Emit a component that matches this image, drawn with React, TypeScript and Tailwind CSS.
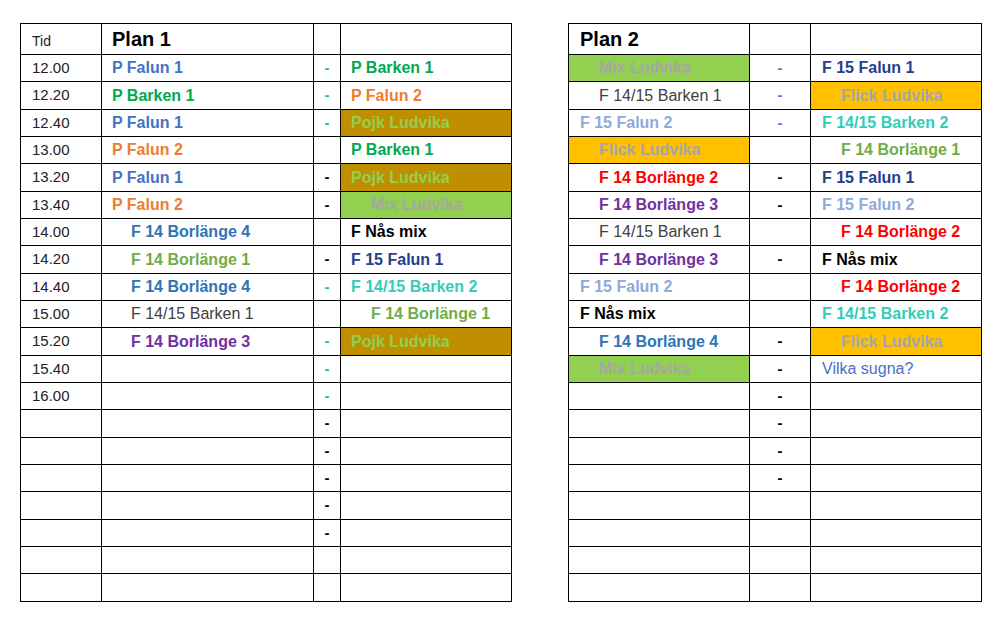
import React from "react";

type Cell = {
  t?: string;
  c?: string; // text colour class
  bg?: string; // fill class
  indent?: boolean;
  regular?: boolean;
};

type Dash = "g" | "b" | "k" | "";

const PL = { t: "P Falun 1", c: "text-[#4472c4]" };
const PB = { t: "P Barken 1", c: "text-[#00a850]" };
const PF2 = { t: "P Falun 2", c: "text-[#ed7d31]" };
const POJK = { t: "Pojk Ludvika", c: "text-[#92d050]", bg: "bg-[#bf8f00]" };
const MIX = { t: "Mix Ludvika", c: "text-[#a6a6a6]", bg: "bg-[#92d050]", indent: true };
const FLICK = { t: "Flick Ludvika", c: "text-[#a6a6a6]", bg: "bg-[#ffc000]", indent: true };
const B4 = { t: "F 14 Borlänge 4", c: "text-[#2e75b6]", indent: true };
const B1 = { t: "F 14 Borlänge 1", c: "text-[#70ad47]", indent: true };
const B2 = { t: "F 14 Borlänge 2", c: "text-[#ff0000]", indent: true };
const B3 = { t: "F 14 Borlänge 3", c: "text-[#7030a0]", indent: true };
const BK1 = { t: "F 14/15 Barken 1", c: "text-[#404040]", indent: true, regular: true };
const BK2 = { t: "F 14/15 Barken 2", c: "text-[#33ccb8]" };
const NAS = { t: "F Nås mix", c: "text-black" };
const FA1 = { t: "F 15 Falun 1", c: "text-[#24408e]" };
const FA2 = { t: "F 15 Falun 2", c: "text-[#8eaadb]" };
const VILKA = { t: "Vilka sugna?", c: "text-[#4472c4]", regular: true };

const PLAN1: [string, Cell, Dash, Cell][] = [
  ["12.00", PL, "g", PB],
  ["12.20", PB, "g", PF2],
  ["12.40", PL, "g", POJK],
  ["13.00", PF2, "", PB],
  ["13.20", PL, "k", POJK],
  ["13.40", PF2, "k", MIX],
  ["14.00", B4, "", NAS],
  ["14.20", B1, "k", FA1],
  ["14.40", B4, "g", BK2],
  ["15.00", BK1, "", B1],
  ["15.20", B3, "g", POJK],
  ["15.40", {}, "g", {}],
  ["16.00", {}, "g", {}],
  ["", {}, "k", {}],
  ["", {}, "k", {}],
  ["", {}, "k", {}],
  ["", {}, "k", {}],
  ["", {}, "k", {}],
  ["", {}, "", {}],
  ["", {}, "", {}],
];

const PLAN2: [Cell, Dash, Cell][] = [
  [MIX, "b", FA1],
  [BK1, "b", FLICK],
  [FA2, "b", BK2],
  [FLICK, "", B1],
  [B2, "k", FA1],
  [B3, "k", FA2],
  [BK1, "", B2],
  [B3, "k", NAS],
  [FA2, "", B2],
  [NAS, "", BK2],
  [B4, "k", FLICK],
  [MIX, "k", VILKA],
  [{}, "k", {}],
  [{}, "k", {}],
  [{}, "k", {}],
  [{}, "k", {}],
  [{}, "", {}],
  [{}, "", {}],
  [{}, "", {}],
  [{}, "", {}],
];

const td = "border border-black p-0 align-middle";

function TeamCell({ cell, pad, indentPad }: { cell: Cell; pad: string; indentPad: string }) {
  return (
    <td className={`${td} ${cell.bg ?? ""}`}>
      {cell.t && (
        <span
          className={`block whitespace-nowrap text-[16px] leading-none ${cell.indent ? indentPad : pad} ${
            cell.regular ? "font-normal" : "font-bold"
          } ${cell.c ?? ""}`}
        >
          {cell.t}
        </span>
      )}
    </td>
  );
}

function DashCell({ d }: { d: Dash }) {
  const color =
    d === "g" ? "text-[#3cb371]" : d === "b" ? "text-[#4a7cc9]" : "text-black";
  return (
    <td className={`${td} text-center text-[15px] font-bold ${color}`}>{d ? "-" : ""}</td>
  );
}

const rowH = (i: number) => (i % 3 === 1 ? "h-[28px]" : "h-[27px]");

export default function App() {
  return (
    <div
      className="w-[1000px] h-[623px] bg-white flex items-start gap-[56px] pl-[20px] pt-[23px]"
      style={{ fontFamily: '"Liberation Sans", Arial, sans-serif' }}
    >
      {/* Plan 1 */}
      <table className="table-fixed border-collapse w-[491px]">
        <colgroup>
          <col className="w-[81px]" />
          <col className="w-[212px]" />
          <col className="w-[27px]" />
          <col className="w-[171px]" />
        </colgroup>
        <tbody>
          <tr className="h-[31px]">
            <td className={`${td} pl-[11px] pt-[5px] text-[14px] text-[#222]`}>Tid</td>
            <td className={`${td} pl-[10px] text-[20px] font-bold text-black`}>Plan 1</td>
            <td className={td} />
            <td className={td} />
          </tr>
          {PLAN1.map(([time, a, d, b], i) => (
            <tr key={i} className={rowH(i)}>
              <td className={`${td} pl-[11px] text-[15px] text-[#222]`}>{time}</td>
              <TeamCell cell={a} pad="pl-[10px]" indentPad="pl-[29px]" />
              <DashCell d={d} />
              <TeamCell cell={b} pad="pl-[10px]" indentPad="pl-[30px]" />
            </tr>
          ))}
        </tbody>
      </table>

      {/* Plan 2 */}
      <table className="table-fixed border-collapse w-[413px]">
        <colgroup>
          <col className="w-[181px]" />
          <col className="w-[61px]" />
          <col className="w-[171px]" />
        </colgroup>
        <tbody>
          <tr className="h-[31px]">
            <td className={`${td} pl-[11px] text-[20px] font-bold text-black`}>Plan 2</td>
            <td className={td} />
            <td className={td} />
          </tr>
          {PLAN2.map(([a, d, b], i) => (
            <tr key={i} className={rowH(i)}>
              <TeamCell cell={a} pad="pl-[11px]" indentPad="pl-[30px]" />
              <DashCell d={d} />
              <TeamCell cell={b} pad="pl-[11px]" indentPad="pl-[30px]" />
            </tr>
          ))}
        </tbody>
      </table>
    </div>
  );
}
